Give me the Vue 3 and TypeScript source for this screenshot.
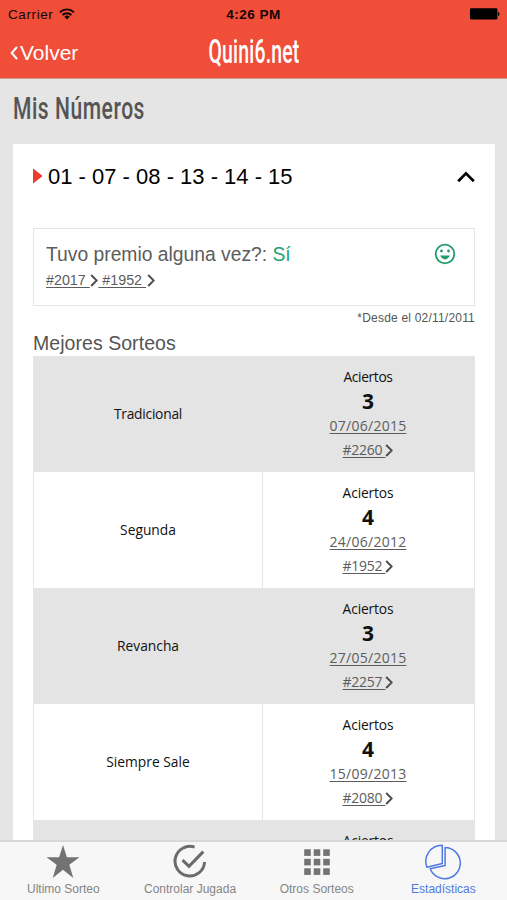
<script setup lang="ts">
interface Draw {
  name: string
  hits: number
  date: string
  id: string
}

const draws: Draw[] = [
  { name: 'Tradicional', hits: 3, date: '07/06/2015', id: '#2260' },
  { name: 'Segunda', hits: 4, date: '24/06/2012', id: '#1952' },
  { name: 'Revancha', hits: 3, date: '27/05/2015', id: '#2257' },
  { name: 'Siempre Sale', hits: 4, date: '15/09/2013', id: '#2080' },
  { name: '', hits: 3, date: '', id: '' },
]
const cells = [0, 9.5, 19]
</script>

<template>
  <div class="screen">
    <header class="header">
      <div class="status">
        <span class="carrier">
          Carrier
          <svg width="16" height="12" viewBox="0 0 16 12" fill="none" stroke="#140503" stroke-width="1.9">
            <path d="M1 4.2a10.2 10.2 0 0 1 14 0M3.5 7a6.5 6.5 0 0 1 9 0" />
            <path d="M8 11.4L5.3 8.7a3.9 3.9 0 0 1 5.4 0z" fill="#140503" stroke="none" />
          </svg>
        </span>
        <span class="time">4:26 PM</span>
        <span class="power">
          <svg width="30" height="12" viewBox="0 0 30 12">
            <rect x="0" y="0.3" width="27.4" height="11.2" rx="1.3" />
            <path d="M28 3.9c1.9.3 1.9 3.7 0 4z" />
          </svg>
        </span>
      </div>
      <nav class="nav">
        <a class="back">
          <svg width="8" height="14" viewBox="0 0 8 14" fill="none" stroke="#fff" stroke-width="2"><path d="M7 1L1.7 7L7 13" /></svg>
          <span>Volver</span>
        </a>
        <svg class="brand" width="92" height="40" viewBox="0 0 92 40">
          <text x="0.5" y="30" textLength="91" lengthAdjust="spacingAndGlyphs">Quini6.net</text>
        </svg>
      </nav>
    </header>

    <main class="content">
      <h1 class="heading">
        <svg width="140" height="42" viewBox="0 0 140 42">
          <text x="0" y="28" textLength="132" lengthAdjust="spacingAndGlyphs">Mis Números</text>
        </svg>
      </h1>
      <section class="card">
        <div class="pick">
          <svg width="10" height="16" viewBox="0 0 10 16"><path d="M0 0.5L9.6 8L0 15.5z" fill="#f0392b" /></svg>
          <span class="numbers">01 - 07 - 08 - 13 - 14 - 15</span>
          <svg class="toggle" width="18" height="12" viewBox="0 0 18 12" fill="none" stroke="#000" stroke-width="2.7"><path d="M1.2 10.2L9 2.4L16.8 10.2" /></svg>
        </div>
        <div class="prize">
          <div>
            <p class="question">Tuvo premio alguna vez?: <b>Sí</b></p>
            <p class="links">
              <a>#2017&nbsp;</a><svg class="arrow" viewBox="0 0 8 13"><path d="M1.2 1L6.7 6.5L1.2 12" /></svg><a>&nbsp;#1952&nbsp;</a><svg class="arrow" viewBox="0 0 8 13"><path d="M1.2 1L6.7 6.5L1.2 12" /></svg>
            </p>
          </div>
          <svg class="smile" width="22" height="22" viewBox="0 0 22 22">
            <circle cx="11" cy="11" r="9.3" fill="none" stroke="#219a6c" stroke-width="1.8" />
            <circle cx="7.5" cy="8" r="1.4" /><circle cx="14.5" cy="8" r="1.4" />
            <path d="M6.2 12.6H15.8C14.9 15 13.2 16.4 11 16.4S7.1 15 6.2 12.6z" />
          </svg>
        </div>
        <p class="since">*Desde el 02/11/2011</p>
        <h2 class="subtitle">Mejores Sorteos</h2>
        <div class="table">
          <div v-for="draw in draws" :key="draw.name" class="row">
            <div class="name">{{ draw.name }}</div>
            <div class="result">
              <span class="label">Aciertos</span>
              <template v-if="draw.id">
                <strong>{{ draw.hits }}</strong>
                <a class="date">{{ draw.date }}</a>
                <span class="draw"><a>{{ draw.id }}&nbsp;</a><svg class="arrow" viewBox="0 0 8 13"><path d="M1.2 1L6.7 6.5L1.2 12" /></svg></span>
              </template>
            </div>
          </div>
        </div>
      </section>
    </main>

    <footer class="tabs">
      <a class="tab">
        <svg width="36" height="36" viewBox="0 0 36 36" fill="#737373"><path d="M18 1L21.9 13.2L34.5 13.2L24.3 20.8L28.3 34L18 25.8L7.7 34L11.7 20.8L1.5 13.2L14.1 13.2z" /></svg>
        <span>Ultimo Sorteo</span>
      </a>
      <a class="tab">
        <svg width="36" height="36" viewBox="0 0 36 36" fill="none" stroke="#6b6b6b" stroke-width="3"><path d="M22.6 3.2A14.8 14.8 0 1 0 32.6 18M10.5 16.2L17 22.4L31.3 7.6" /></svg>
        <span>Controlar Jugada</span>
      </a>
      <a class="tab">
        <svg width="36" height="36" viewBox="0 0 36 36" fill="#737373">
          <g transform="translate(5.2 5.3)">
            <template v-for="y in cells" :key="y"><rect v-for="x in cells" :key="x" :x="x" :y="y" width="6.6" height="6.6" /></template>
          </g>
        </svg>
        <span>Otros Sorteos</span>
      </a>
      <a class="tab active">
        <svg width="36" height="36" viewBox="0 0 36 36" fill="none" stroke="#5079e3" stroke-width="1.5" stroke-linejoin="round">
          <path d="M17.3 1.2A16.2 16.2 0 0 0 1.9 23.2L17.3 19.5z" />
          <path d="M20.1 3.5A15.6 15.6 0 1 1 5.2 24.8L20.1 21.4z" />
        </svg>
        <span>Estadísticas</span>
      </a>
    </footer>
  </div>
</template>

<style>
body { margin: 0; overflow: hidden; }
</style>

<style scoped>
.screen { width: 507px; height: 900px; display: flex; flex-direction: column; overflow: hidden; background: #e5e5e5; font-family: "Liberation Sans", Arial, sans-serif; color: #555; }
p, h1, h2 { margin: 0; font-weight: 400; }
svg { display: block; flex: none; }
.header { height: 78px; flex: none; background: #f04e39; border-bottom: 1px solid #cf9c92; }
.status { height: 28px; display: grid; grid-template-columns: 1fr auto 1fr; align-items: center; font-size: 13.5px; color: #140503; }
.carrier { display: flex; align-items: center; gap: 6px; padding-left: 8px; letter-spacing: .6px; }
.time { font-weight: 700; font-size: 13.5px; letter-spacing: .5px; }
.power { display: flex; justify-content: flex-end; padding-right: 7px; }
.nav { display: grid; grid-template-columns: 1fr 92px 1fr; align-items: center; height: 50px; }
.back { display: flex; align-items: center; gap: 2px; padding-left: 10px; font-size: 21px; color: #fff; }
.brand, .heading svg { overflow: visible; }
.brand text { font: 500 33px Roboto, sans-serif; letter-spacing: .3px; fill: #fff; }
.content { flex: 1; min-height: 0; overflow: hidden; padding: 12px 13px 0; }
.heading { height: 53px; }
.heading text { font: 500 32px Roboto, sans-serif; letter-spacing: .8px; fill: #555; }
.card { width: 442px; padding: 0 20px; background: #fff; }
.pick { height: 84px; display: flex; align-items: flex-start; box-sizing: border-box; padding-top: 20px; color: #000; }
.pick svg { margin-top: 4px; }
.numbers { margin-left: 5px; font-size: 22px; line-height: 26px; }
.pick .toggle { margin: 7px 0 0 auto; }
.prize { height: 78px; box-sizing: border-box; border: 1px solid #e5e5e5; padding: 14px 18px 0 12px; display: flex; justify-content: space-between; }
.question { font-size: 19.3px; line-height: 24px; color: #5c5c5c; }
.question b { font-weight: 400; color: #24a374; }
.links { display: flex; align-items: center; font-size: 14.3px; line-height: 16px; margin-top: 5px; }
.links a, .date, .draw a { text-decoration: underline; text-underline-offset: 2px; color: #5c5c5c; }
.arrow { width: 8px; height: 13px; fill: none; stroke: #4d4d4d; stroke-width: 1.9; }
.links .arrow { margin-left: .6px; }
.smile { fill: #219a6c; }
.since { height: 25px; line-height: 25px; font-size: 12px; text-align: right; letter-spacing: .2px; }
.subtitle { height: 25px; line-height: 25px; font-size: 19.5px; letter-spacing: .05px; }
.table { border: solid #e5e5e5; border-width: 0 1px; }
.row { height: 116px; display: grid; grid-template-columns: 229px 1fr; font-family: "Open Sans", sans-serif; color: #111; }
.row:nth-child(odd) { background: #e4e4e4; }
.name { display: grid; place-items: center; padding-bottom: 2px; border-right: 1px solid #e5e5e5; font-size: 13.8px; font-weight: 500; }
.row:first-child .name { letter-spacing: -.25px; }
.result { display: flex; flex-direction: column; align-items: center; padding: 9px 1px 0 0; line-height: 24.3px; font-size: 13.8px; }
.label { font-weight: 500; letter-spacing: -.15px; }
.row:first-child .label { letter-spacing: -.35px; }
.result strong { font-size: 21px; }
.date { font-size: 14px; letter-spacing: .25px; }
.draw { display: flex; align-items: center; font-size: 14px; letter-spacing: -.3px; }
.tabs { height: 60px; flex: none; box-sizing: border-box; border-top: 2px solid #d8d8d8; display: grid; grid-template-columns: repeat(4, 126.7px); background: #f7f7f7; padding-top: 2px; }
.tab { display: flex; flex-direction: column; align-items: center; font-size: 12px; color: #858585; white-space: nowrap; }
.tab span { line-height: 16px; margin-top: 1px; }
.active { color: #5079e3; }
</style>
